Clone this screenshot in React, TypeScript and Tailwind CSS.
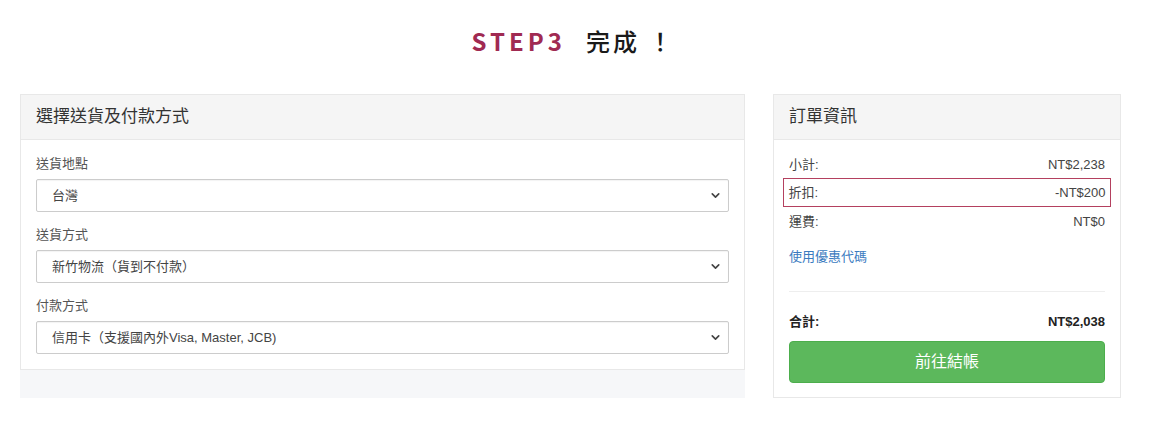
import { ChevronDown } from "lucide-react";

const font = { fontFamily: '"Liberation Sans", "Noto Sans CJK TC", sans-serif' };

function SelectField({ label, value }: { label: string; value: string }) {
  return (
    <div className="mb-[14px]">
      <p className="text-[13px] text-[#555] leading-[18px] mb-[6px]">{label}</p>
      <div className="flex items-center justify-between h-[33px] border border-[#ccc] rounded-[2px] pl-[15px] pr-[6px] bg-white shadow-[inset_0_1px_1px_rgba(0,0,0,0.05)]">
        <span className="text-[13px] text-[#444]">{value}</span>
        <ChevronDown className="w-[13px] h-[13px] text-[#444]" strokeWidth={3} />
      </div>
    </div>
  );
}

function Row({ label, value, bold }: { label: string; value: string; bold?: boolean }) {
  return (
    <div className={`flex justify-between text-[13px] ${bold ? "font-bold text-[#222]" : "text-[#444]"}`}>
      <span>{label}</span>
      <span>{value}</span>
    </div>
  );
}

export default function App() {
  return (
    <main className="w-[1173px] h-[442px] bg-white" style={font}>
      {/* title */}
      <div className="flex justify-center items-center h-[94px] pb-[12px] pr-[26px]">
        <h1 className="flex items-center text-[24px] font-bold leading-none">
          <span className="text-[#a02a52] tracking-[4px]" style={{ fontFamily: '"Noto Sans CJK TC", sans-serif' }}>STEP3</span>
          <span className="ml-[20px] text-[#1a1a1a] tracking-[3px]" style={{ fontFamily: '"Noto Sans CJK TC", sans-serif', fontWeight: 500 }}>完成 ！</span>
        </h1>
      </div>

      <div className="flex px-[20px] gap-[28px]">
        {/* left */}
        <section className="w-[725px] h-[304px] bg-[#f6f7f9]">
          <div className="border border-[#e8e8e8] bg-white">
            <div className="h-[45px] bg-[#f5f5f5] border-b border-[#e8e8e8] flex items-center px-[15px]">
              <h2 className="text-[17px] text-[#333]">選擇送貨及付款方式</h2>
            </div>
            <div className="px-[15px] pt-[15px] pb-[1px]">
              <SelectField label="送貨地點" value="台灣" />
              <SelectField label="送貨方式" value="新竹物流（貨到不付款）" />
              <SelectField label="付款方式" value="信用卡（支援國內外Visa, Master, JCB)" />
            </div>
          </div>
        </section>

        {/* right */}
        <section className="w-[348px] h-[304px] border border-[#e8e8e8] bg-white">
          <div className="h-[45px] bg-[#f5f5f5] border-b border-[#e8e8e8] flex items-center px-[15px]">
            <h2 className="text-[17px] text-[#333]">訂單資訊</h2>
          </div>
          <div className="px-[15px] pt-[15px]">
            <Row label="小計:" value="NT$2,238" />
            <div className="-mx-[6px] mt-[3px] px-[4.5px] py-[4px] border-[1.5px] border-[#b4405f]">
              <Row label="折扣:" value="-NT$200" />
            </div>
            <div className="mt-[5px]">
              <Row label="運費:" value="NT$0" />
            </div>
            <p className="mt-[15px] text-[13px] text-[#3b7bbf]">使用優惠代碼</p>
            <hr className="mt-[25px] border-[#eee]" />
            <div className="mt-[20px]">
              <Row label="合計:" value="NT$2,038" bold />
            </div>
            <button className="mt-[9px] w-full h-[42px] rounded-[4px] bg-[#5cb85c] border border-[#4cae4c] text-white text-[16px]">
              前往結帳
            </button>
          </div>
        </section>
      </div>
    </main>
  );
}
